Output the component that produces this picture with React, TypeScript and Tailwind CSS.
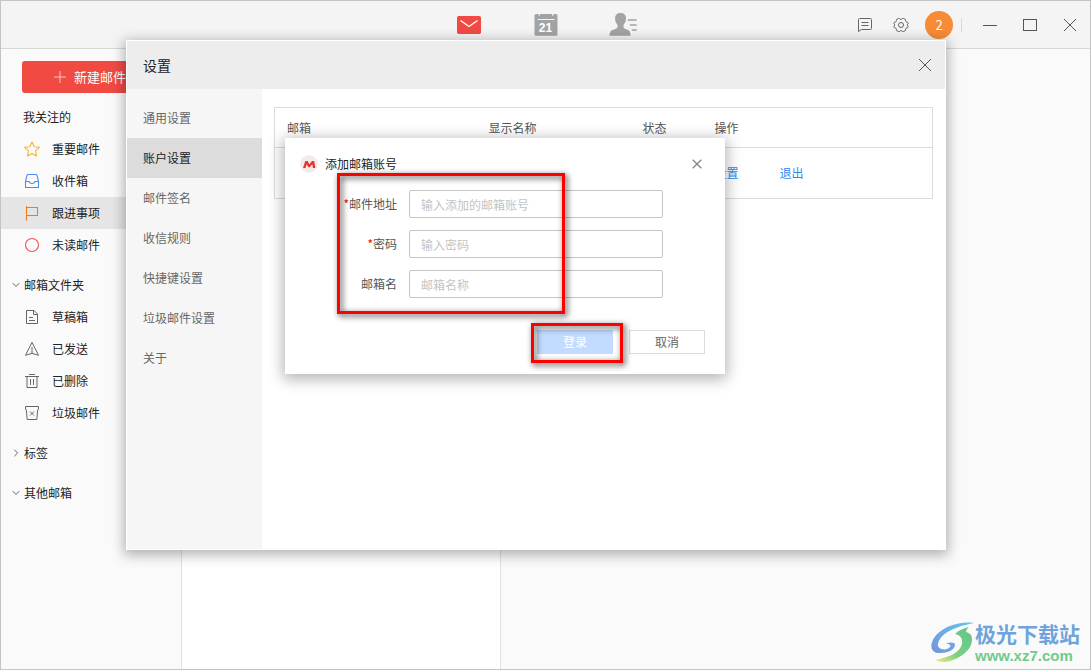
import type { ReactNode } from "react";

const iconBase = "h-4 w-4 shrink-0 fill-none";

function StarIcon() {
  return (
    <svg viewBox="0 0 16 16" className={`${iconBase} stroke-[#f9b23a]`}>
      <path d="M8 1l2.2 4.7 5.2.6-3.8 3.5 1 5.1L8 12.4l-4.6 2.5 1-5.1L.6 6.3l5.2-.6z" strokeWidth="1.1" strokeLinejoin="round" />
    </svg>
  );
}

function InboxIcon() {
  return (
    <svg viewBox="0 0 16 16" className={`${iconBase} stroke-[#4c8df0]`}>
      <path d="M1.5 8.5L3 2.2Q3.2 1.5 4 1.5h8q.8 0 1 .7l1.5 6.3v6h-13zM1.5 8.5H5q.5 2 3 2t3-2h3.5" strokeWidth="1.1" strokeLinejoin="round" />
    </svg>
  );
}

function FlagIcon() {
  return (
    <svg viewBox="0 0 16 16" className={`${iconBase} stroke-[#f07c1e]`}>
      <path d="M2.5 1v14.5M2.5 2.5h11v8h-11" strokeWidth="1.1" />
    </svg>
  );
}

function UnreadIcon() {
  return (
    <svg viewBox="0 0 16 16" className={`${iconBase} stroke-[#ef5350]`}>
      <circle cx="8" cy="8" r="6.5" strokeWidth="1.1" />
    </svg>
  );
}

function DraftIcon() {
  return (
    <svg viewBox="0 0 16 16" className={`${iconBase} stroke-[#666]`}>
      <path d="M2.5 1.5h7.6l3.4 3.6v9.4h-11zM9.5 1.5v4h4M5 8.500h4M5 11.5h6" />
    </svg>
  );
}

function SentIcon() {
  return (
    <svg viewBox="0 0 16 16" className={`${iconBase} stroke-[#666]`}>
      <path d="M8 1.3l6.5 13L8 12.3l-6.5 2zM8 6v6.3" strokeLinejoin="round" />
    </svg>
  );
}

function TrashIcon() {
  return (
    <svg viewBox="0 0 16 16" className={`${iconBase} stroke-[#666]`}>
      <path d="M1 3.5h14M5 1.5h6M3 3.5v11h10v-11M6.5 6v6M9.5 6v6" />
    </svg>
  );
}

function JunkIcon() {
  return (
    <svg viewBox="0 0 16 16" className={`${iconBase} stroke-[#666]`}>
      <path d="M1.500 4.500v-3h13v3M2.300 4.500l.9 10h9.600l.9-10M6 6.500l4 4M10 6.500l-4 4" />
    </svg>
  );
}

function Chevron({ open }: { open: boolean }) {
  return (
    <svg viewBox="0 0 8 8" className="h-2 w-2 fill-none stroke-[#666]">
      <path d={open ? "M.8 2.2L4 5.4l3.2-3.2" : "M2.4.8l3.2 3.2-3.2 3.2"} />
    </svg>
  );
}

function Cross({ className }: { className: string }) {
  return (
    <svg viewBox="0 0 14 14" className={`fill-none ${className}`}>
      <path d="M1 1l12 12M13 1L1 13" />
    </svg>
  );
}

function FolderItem({ icon, label, active }: { icon: ReactNode; label: string; active?: boolean }) {
  return (
    <li>
      <a
        href="#"
        aria-current={active ? "page" : undefined}
        className={`flex h-8 items-center gap-3 pl-[23px] ${active ? "bg-[#e5e5e5]" : ""}`}
      >
        {icon}
        {label}
      </a>
    </li>
  );
}

function SectionHeading({ label, open }: { label: string; open: boolean }) {
  return (
    <button type="button" aria-expanded={open} className="mt-2 flex h-8 w-full items-center gap-1 pl-[11px]">
      <Chevron open={open} />
      {label}
    </button>
  );
}

function TitleBar() {
  return (
    <header className="grid h-12 shrink-0 grid-cols-[1fr_auto_1fr] items-center border-b border-[#d6d6d6] bg-[#f4f4f4]">
      <span />
      <nav className="flex items-center gap-[49px]">
        <a href="#" aria-label="邮件">
          <svg viewBox="0 0 28 28" className="h-7 w-7">
            <rect x="2" y="5" width="24" height="18" rx="1.8" fill="#f04a43" />
            <path d="M5.5 9.5l8.5 6 8.5-6" fill="none" stroke="#fff" strokeWidth="1.4" />
          </svg>
        </a>
        <a href="#" aria-label="日历" className="relative flex h-7 w-7 justify-center">
          <svg viewBox="0 0 28 28" className="h-7 w-7">
            <path d="M4 3h2.5v1.500h1.500V3h12v1.500h1.500V3H24q1.500 0 1.500 1.500v19q0 1.200-1.500 1.200H4q-1.500 0-1.500-1.200v-19Q2.500 3 4 3z" fill="#a1a3a4" />
            <path d="M5.500 8.500h17" stroke="#f4f4f4" />
          </svg>
          <span className="absolute top-[9px] font-['Liberation_Sans'] text-xs font-bold leading-4 text-white">21</span>
        </a>
        <a href="#" aria-label="联系人">
          <svg viewBox="0 0 28 28" className="h-7 w-7" fill="#a1a3a4">
            <path d="M11.500 2q5.500 0 5.500 5.500 0 4-2.500 6.500v2q0 1.200 1.500 1.700l3.500 1.600q2 1.200 2 5.400H.5q0-4.200 2.500-5.400l4-1.600Q8.500 17.200 8.500 16v-2Q6 11.500 6 7.500 6 2 11.500 2z" />
            <path d="M19.500 9h7.500M21.500 14H27M23.500 19H27" stroke="#a1a3a4" strokeWidth="1.700" strokeLinecap="round" />
          </svg>
        </a>
      </nav>
      <div className="flex items-center justify-end pr-[10px]">
        <button type="button" aria-label="反馈" className="mr-4 flex h-5 w-5 items-center justify-center">
          <svg viewBox="0 0 16 16" className="h-4 w-4 fill-none stroke-[#666]">
            <path d="M2.500 1.500h11q1 0 1 1v9q0 1-1 1H4.500l-3 2v-12q0-1 1-1zM4.500 5.500h7M4.500 8.500h7" />
          </svg>
        </button>
        <button type="button" aria-label="设置" className="mr-[14px] flex h-5 w-5 items-center justify-center">
          <svg viewBox="0 0 16 16" className="h-4 w-4 fill-none stroke-[#666]">
            <path d="M5.300 1.500h1.400q.4 1 1.300 1t1.300-1h1.400l2 1.200q-.4 1.200.2 1.900t1.600.5l.7 1.300q-.8.700-.8 1.600t.8 1.600l-.7 1.300q-1-.1-1.600.5t-.2 1.900l-2 1.200H9.300q-.4-1-1.300-1t-1.300 1H5.300l-2-1.200q.4-1.200-.2-1.900t-1.600-.5L.8 9.600q.8-.7.800-1.600t-.8-1.600l.7-1.300q1 .2 1.600-.5t.2-1.900z" strokeLinejoin="round" />
            <circle cx="8" cy="8" r="2.500" />
          </svg>
        </button>
        <button type="button" aria-label="账户" className="mr-2 h-7 w-7 rounded-full bg-[#f78b36] text-[13px] leading-7 text-white">
          2
        </button>
        <span className="mr-[18px] h-[14px] w-px bg-[#d9d9d9]" />
        <div className="flex gap-5">
          <button type="button" aria-label="最小化" className="flex h-5 w-5 items-center justify-center">
            <svg viewBox="0 0 14 14" className="h-[14px] w-[14px] fill-none stroke-[#555]">
              <path d="M0 7.500h14" />
            </svg>
          </button>
          <button type="button" aria-label="最大化" className="flex h-5 w-5 items-center justify-center">
            <svg viewBox="0 0 14 14" className="h-[14px] w-[14px] fill-none stroke-[#555]">
              <rect x=".5" y="1.500" width="13" height="11" />
            </svg>
          </button>
          <button type="button" aria-label="关闭" className="flex h-5 w-5 items-center justify-center">
            <Cross className="h-[14px] w-[14px] stroke-[#555]" />
          </button>
        </div>
      </div>
    </header>
  );
}

function Sidebar() {
  return (
    <aside className="w-[181px] shrink-0 border-r border-[#e2e2e2] pt-3">
      <button
        type="button"
        className="mx-[21px] flex h-8 w-[138px] items-center gap-2 rounded-[3px] bg-[#f04a43] pl-8 text-[13px] text-white"
      >
        <svg viewBox="0 0 12 12" className="h-3 w-3 stroke-[#fbc4c1]">
          <path d="M6 0v12M0 6h12" />
        </svg>
        新建邮件
      </button>
      <h2 className="mt-2 flex h-8 items-center pl-[22px]">我关注的</h2>
      <ul>
        <FolderItem icon={<StarIcon />} label="重要邮件" />
        <FolderItem icon={<InboxIcon />} label="收件箱" />
        <FolderItem icon={<FlagIcon />} label="跟进事项" active />
        <FolderItem icon={<UnreadIcon />} label="未读邮件" />
      </ul>
      <SectionHeading label="邮箱文件夹" open />
      <ul>
        <FolderItem icon={<DraftIcon />} label="草稿箱" />
        <FolderItem icon={<SentIcon />} label="已发送" />
        <FolderItem icon={<TrashIcon />} label="已删除" />
        <FolderItem icon={<JunkIcon />} label="垃圾邮件" />
      </ul>
      <SectionHeading label="标签" open={false} />
      <SectionHeading label="其他邮箱" open />
    </aside>
  );
}

const settingsTabs = ["通用设置", "账户设置", "邮件签名", "收信规则", "快捷键设置", "垃圾邮件设置", "关于"];

function SettingsDialog() {
  return (
    <section
      role="dialog"
      aria-label="设置"
      className="absolute left-[125px] top-[39px] flex h-[510px] w-[820px] flex-col border border-white bg-white shadow-[0_3px_12px_2px_rgba(0,0,0,0.3)]"
    >
      <div className="flex h-12 shrink-0 items-center justify-between bg-[#ededed] pl-4 pr-[13px]">
        <h1 className="text-sm text-[#222]">设置</h1>
        <button type="button" aria-label="关闭设置">
          <Cross className="h-[14px] w-[14px] stroke-[#555]" />
        </button>
      </div>
      <div className="flex min-h-0 flex-1">
        <nav className="w-[135px] shrink-0 bg-[#f6f6f6] pt-[9px]">
          {settingsTabs.map((tab) => (
            <a
              key={tab}
              href="#"
              className={`flex h-10 items-center pl-4 ${tab === "账户设置" ? "bg-[#dcdcdc] text-[#222]" : "text-[#666]"}`}
            >
              {tab}
            </a>
          ))}
        </nav>
        <div className="flex-1 px-3 pt-[18px]">
          <table className="w-full table-fixed border-collapse border border-[#dcdcdc] text-left text-[#555]">
            <thead>
              <tr className="h-10 border-b border-[#dcdcdc]">
                <th className="w-[202px] px-3 font-normal">邮箱</th>
                <th className="w-[154px] px-3 font-normal">显示名称</th>
                <th className="w-[72px] px-3 font-normal">状态</th>
                <th className="px-3 font-normal">操作</th>
              </tr>
            </thead>
            <tbody>
              <tr className="h-[51px]">
                <td />
                <td />
                <td />
                <td className="px-3 text-[#2d8cf0]">
                  <div className="flex gap-[41px]">
                    <a href="#">设置</a>
                    <a href="#">退出</a>
                  </div>
                </td>
              </tr>
            </tbody>
          </table>
        </div>
      </div>
    </section>
  );
}

function Field({ id, label, placeholder, type = "text", required }: { id: string; label: string; placeholder: string; type?: string; required?: boolean }) {
  return (
    <div className="flex items-center gap-3">
      <label htmlFor={id} className="w-28 text-right text-[#555]">
        {required && <span className="text-[#f00]">*</span>}
        {label}
      </label>
      <input
        id={id}
        type={type}
        placeholder={placeholder}
        className="h-7 min-w-0 flex-1 rounded-[2px] border border-[#c6c6c6] bg-white px-[11px] text-xs placeholder:text-[#c4c4c4]"
      />
    </div>
  );
}

const markClass =
  "pointer-events-none absolute border-[3px] border-[#f00] drop-shadow-[2px_2px_3px_rgba(0,0,0,0.8)]";

function AddAccountDialog() {
  return (
    <section
      role="dialog"
      aria-label="添加邮箱账号"
      className="absolute left-[284px] top-[137px] w-[440px] bg-white pb-5 shadow-[0_3px_14px_2px_rgba(0,0,0,0.3)]"
    >
      <div className="flex h-[52px] items-center gap-[7px] pl-[15px] pr-[23px]">
        <svg viewBox="0 0 18 18" className="h-[18px] w-[18px]">
          <circle cx="9" cy="9" r="9" fill="#f5eaea" />
          <path d="M3 13L5.300 6h2.400l1.600 3.200L12 6h2.200L15.400 13h-2.500l-.6-3.700L9.700 12.200H8.300L6.700 9.300 5.500 13z" fill="#e8352e" />
        </svg>
        <h2 className="flex-1 text-[#222]">添加邮箱账号</h2>
        <button type="button" aria-label="关闭">
          <Cross className="h-[10px] w-[10px] stroke-[#888] stroke-2" />
        </button>
      </div>
      <form className="flex flex-col">
        <div className="flex flex-col gap-3 pr-[62px]">
          <Field id="address" label="邮件地址" placeholder="输入添加的邮箱账号" required />
          <Field id="password" label="密码" placeholder="输入密码" type="password" required />
          <Field id="name" label="邮箱名" placeholder="邮箱名称" />
        </div>
        <div className="mt-8 flex justify-end gap-4 pr-5">
          <button type="button" className="h-6 w-[76px] bg-[#c2dcff] text-white">
            登录
          </button>
          <button type="button" className="h-6 w-[76px] border border-[#dcdcdc] bg-white text-[#666]">
            取消
          </button>
        </div>
      </form>
      <div className={`${markClass} left-[52px] top-[35px] h-[141px] w-[228px]`} />
      <div className={`${markClass} left-[246px] top-[185px] h-10 w-[92px]`} />
    </section>
  );
}

function Watermark() {
  return (
    <div className="absolute bottom-[5px] right-[10px] flex items-end">
      <svg viewBox="0 0 44 42" className="h-[42px] w-11">
        <defs>
          <linearGradient id="swirlBlue" x1="1" y1="0" x2="0" y2="1">
            <stop offset="0" stopColor="#62c4ee" />
            <stop offset="1" stopColor="#7595dc" />
          </linearGradient>
          <linearGradient id="swirlGreen" x1="1" y1="0" x2="0" y2="1">
            <stop offset="0" stopColor="#5fc48c" />
            <stop offset=".6" stopColor="#7ccf83" />
            <stop offset="1" stopColor="#f0ec77" />
          </linearGradient>
        </defs>
        <path d="M43 1C30-1 11 4 3 16-3 26 2 32 10 31c8 0 14-4 14-8 0-3-5-3-9-1 4 0 5 1 4 3-3 4-13 3-12-3C9 12 22 5 43 1z" fill="url(#swirlBlue)" />
        <path d="M38 5C33 6 28 8 24 12c5 1 8 4 7 10C29 30 20 35 4 38c2 1 6 2 10 2C28 38 41 28 41 18c0-5-2-7-6-8 0-2 1-3 3-5z" fill="url(#swirlGreen)" />
      </svg>
      <div className="flex flex-col">
        <span className="text-[21px] font-bold leading-[30px] text-[#6fa3da]">极光下载站</span>
        <span className="font-['Liberation_Sans'] text-[15px] font-bold leading-[16px] text-[#70ca8c]">www.xz7.com</span>
      </div>
    </div>
  );
}

export default function App() {
  return (
    <div className="relative flex min-h-screen flex-col overflow-hidden border border-[#c4c4c4] bg-[#fafafa] font-['Noto_Sans_CJK_SC',sans-serif] text-xs text-[#222]">
      <TitleBar />
      <main className="flex flex-1">
        <Sidebar />
        <div className="w-[319px] shrink-0 border-r border-[#e2e2e2] bg-white" />
        <div className="flex-1" />
      </main>
      <SettingsDialog />
      <AddAccountDialog />
      <Watermark />
    </div>
  );
}
